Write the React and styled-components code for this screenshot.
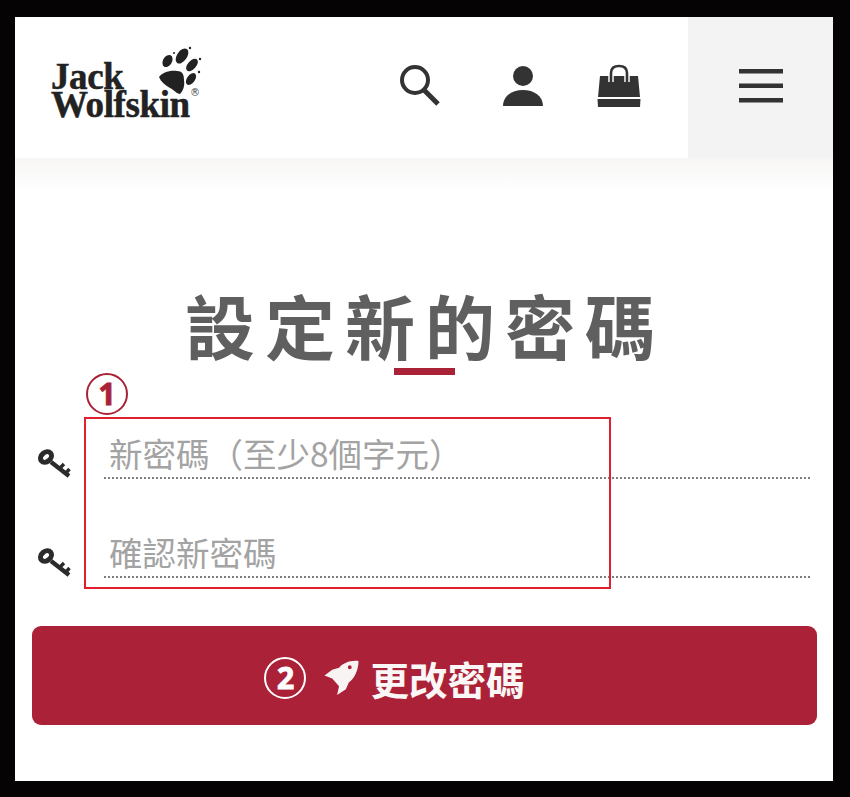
import styled, { createGlobalStyle } from 'styled-components';

const GlobalStyle = createGlobalStyle`
  html, body {
    margin: 0;
    background: #050303;
  }
`;

const Frame = styled.div`
  width: 850px;
  height: 797px;
  box-sizing: border-box;
  padding: 17px 17px 16px 15px;
  overflow: hidden;
`;

const Screen = styled.div`
  position: relative;
  height: 764px;
  background: #fff;
  font-family: "Noto Sans CJK TC", "Noto Sans", sans-serif;
`;

const Header = styled.header`
  display: flex;
  height: 141px;
`;

const HeaderMain = styled.div`
  flex: 1;
  display: flex;
  align-items: center;
  padding: 0 47px 0 36px;
`;

const Logo = styled.div`
  position: relative;
  width: 150px;
  height: 90px;
  margin-top: 7px;
`;

const LogoText = styled.div`
  position: absolute;
  left: 0;
  bottom: 17px;
  font-family: "Liberation Serif", serif;
  font-weight: 700;
  font-size: 37px;
  line-height: 28px;
  letter-spacing: -0.4px;
  color: #222;
  -webkit-text-stroke: 0.5px #222;
`;

const Registered = styled.span`
  position: absolute;
  left: 139px;
  top: 41px;
  font-family: "DejaVu Sans", sans-serif;
  font-size: 10px;
  line-height: 12px;
  color: #444;
`;

const Paw = styled.svg`
  position: absolute;
  left: 99px;
  top: -2px;
`;

const HeaderIcons = styled.nav`
  margin: -4px 0 0 auto;
  display: flex;
  align-items: center;
  gap: 53px;
`;

const SearchIcon = styled.svg`
  margin-right: 7px;
`;

const MenuButton = styled.div`
  width: 145px;
  padding-bottom: 4px;
  box-sizing: border-box;
  background: #f4f3f3;
  display: flex;
  align-items: center;
  justify-content: center;
`;

const HeaderFade = styled.div`
  height: 34px;
  background: linear-gradient(#f7f6f5, #fff);
`;

const Main = styled.main`
  padding-top: 91px;
  display: flex;
  flex-direction: column;
`;

const Title = styled.h1`
  margin: 0 0 0 2px;
  text-align: center;
  font-size: 70px;
  line-height: 84px;
  font-weight: 700;
  letter-spacing: 10px;
  color: #5f5f5f;
`;

const TitleBar = styled.div`
  align-self: center;
  width: 61px;
  height: 7px;
  margin-top: 1px;
  background: #a92238;
`;

const Form = styled.form`
  position: relative;
  margin-top: 55px;
  padding: 0 23px;
  display: flex;
  flex-direction: column;
  gap: 50px;
`;

const Field = styled.div`
  display: flex;
  align-items: flex-end;
  gap: 32px;
  height: 49px;
`;

const KeyIcon = styled.svg`
  flex: none;
`;

const Placeholder = styled.div`
  flex: 1;
  height: 49px;
  box-sizing: border-box;
  padding-left: 5px;
  border-bottom: 2px dotted #7d7d7d;
  font-size: 33.5px;
  line-height: 46px;
  color: #a3a3a3;
  white-space: nowrap;
`;

const Highlight = styled.div`
  position: absolute;
  left: 69px;
  top: -13px;
  width: 523px;
  height: 168px;
  border: 2px solid #e0202c;
  pointer-events: none;
`;

const Step = styled.span`
  flex: none;
  box-sizing: border-box;
  width: 42px;
  height: 42px;
  border-radius: 50%;
  border: 2px solid ${({ $color }) => $color};
  color: ${({ $color }) => $color};
  display: flex;
  align-items: center;
  justify-content: center;
  font-family: "Noto Sans", sans-serif;
  font-size: 30px;
  font-weight: 700;
  line-height: 1;
  -webkit-text-stroke: 1px ${({ $color }) => $color};
`;

const FloatingStep = styled(Step)`
  position: absolute;
  left: 71px;
  top: -57px;
`;

const SubmitButton = styled.button`
  display: flex;
  align-items: center;
  justify-content: center;
  gap: 11px;
  width: 785px;
  height: 99px;
  margin: 48px 0 0 17px;
  padding: 4px 60px 0 0;
  border: 0;
  border-radius: 9px;
  background: #ab2238;
  color: #fbf7f7;
  font-family: inherit;
  font-size: 38.5px;
  font-weight: 700;
`;

const Rocket = styled.svg`
  margin-left: 6px;
`;

function Key() {
  return (
    <KeyIcon width="34" height="32" viewBox="0 0 34 32" fill="none" stroke="#2b2b2b">
      <ellipse cx="8" cy="10" rx="6" ry="4.6" strokeWidth="5" transform="rotate(-40 8 10)" />
      <path d="M13 15 L31 29" strokeWidth="4.4" />
      <path d="M21 22 L26 17 M27 27 L31.5 22" strokeWidth="3.4" />
    </KeyIcon>
  );
}

function App() {
  return (
    <Frame>
      <GlobalStyle />
      <Screen>
        <Header>
          <HeaderMain>
            <Logo>
              <Paw width="56" height="56" viewBox="0 0 56 56" fill="#222">
                <ellipse cx="17.5" cy="17" rx="4.5" ry="6.5" transform="rotate(30 17.5 17)" />
                <ellipse cx="32" cy="12" rx="5" ry="8.5" transform="rotate(35 32 12)" />
                <ellipse cx="42" cy="21" rx="4.2" ry="7.5" transform="rotate(42 42 21)" />
                <ellipse cx="41" cy="35" rx="4" ry="6.8" transform="rotate(35 41 35)" />
                <path d="M9 33 C12 29 19 26 27 27 C32 27 34 30 34 36 C35 42 33 47 30 50 C27 50 24 46 20 44 C15 41 11 38 9 33 Z" />
                <circle cx="40" cy="4" r="1.2" />
                <circle cx="50" cy="15" r="1.2" />
                <circle cx="49" cy="28" r="1.2" />
                <circle cx="24" cy="9" r="1" />
              </Paw>
              <LogoText>
                Jack
                <br />
                Wolfskin
              </LogoText>
              <Registered>{'®\uFE0E'}</Registered>
            </Logo>
            <HeaderIcons>
              <SearchIcon width="42" height="42" viewBox="0 0 42 42" fill="none" stroke="#333">
                <circle cx="15" cy="15" r="13" strokeWidth="4" />
                <path d="M24 25 L38 39" strokeWidth="5" />
              </SearchIcon>
              <svg width="42" height="42" viewBox="0 0 42 42" fill="#333">
                <circle cx="21" cy="11" r="10" />
                <path d="M1 41 C1 31 10 25 21 25 C32 25 41 31 41 41 Z" />
              </svg>
              <svg width="44" height="44" viewBox="0 0 44 44">
                <path d="M3 12 H41 L43 33 H1 Z" fill="#333" />
                <path d="M0.5 35 H43.5 L43 43 H1 Z" fill="#333" />
                <path d="M14 18 V9 C14 4 17 2 22 2 C27 2 30 4 30 9 V18" fill="none" stroke="#fff" strokeWidth="5.5" />
                <path d="M14 18 V9 C14 4 17 2 22 2 C27 2 30 4 30 9 V18" fill="none" stroke="#333" strokeWidth="2.6" />
              </svg>
            </HeaderIcons>
          </HeaderMain>
          <MenuButton>
            <svg width="44" height="34" viewBox="0 0 44 34" fill="#333">
              <rect x="0" y="0" width="44" height="4.5" />
              <rect x="0" y="14.5" width="44" height="4.5" />
              <rect x="0" y="29" width="44" height="4.5" />
            </svg>
          </MenuButton>
        </Header>
        <HeaderFade />
        <Main>
          <Title>設定新的密碼</Title>
          <TitleBar />
          <Form>
            <FloatingStep $color="#a92238">1</FloatingStep>
            <Field>
              <Key />
              <Placeholder>新密碼（至少8個字元）</Placeholder>
            </Field>
            <Field>
              <Key />
              <Placeholder>確認新密碼</Placeholder>
            </Field>
            <Highlight />
          </Form>
          <SubmitButton type="button">
            <Step $color="#fff">2</Step>
            <Rocket width="36" height="36" viewBox="8 6 36 37" fill="#f8f4f4">
              <path fillRule="evenodd" d="M44 7 C36 6 28 9 24 14 L17 16 L9 22 L17 25 L24 33 L22 42 L31 36 L34 29 C40 25 44 16 44 7 Z M35 11.5 A2 2 0 1 0 35 15.5 A2 2 0 1 0 35 11.5 Z" />
            </Rocket>
            <span>更改密碼</span>
          </SubmitButton>
        </Main>
      </Screen>
    </Frame>
  );
}

export default App;
